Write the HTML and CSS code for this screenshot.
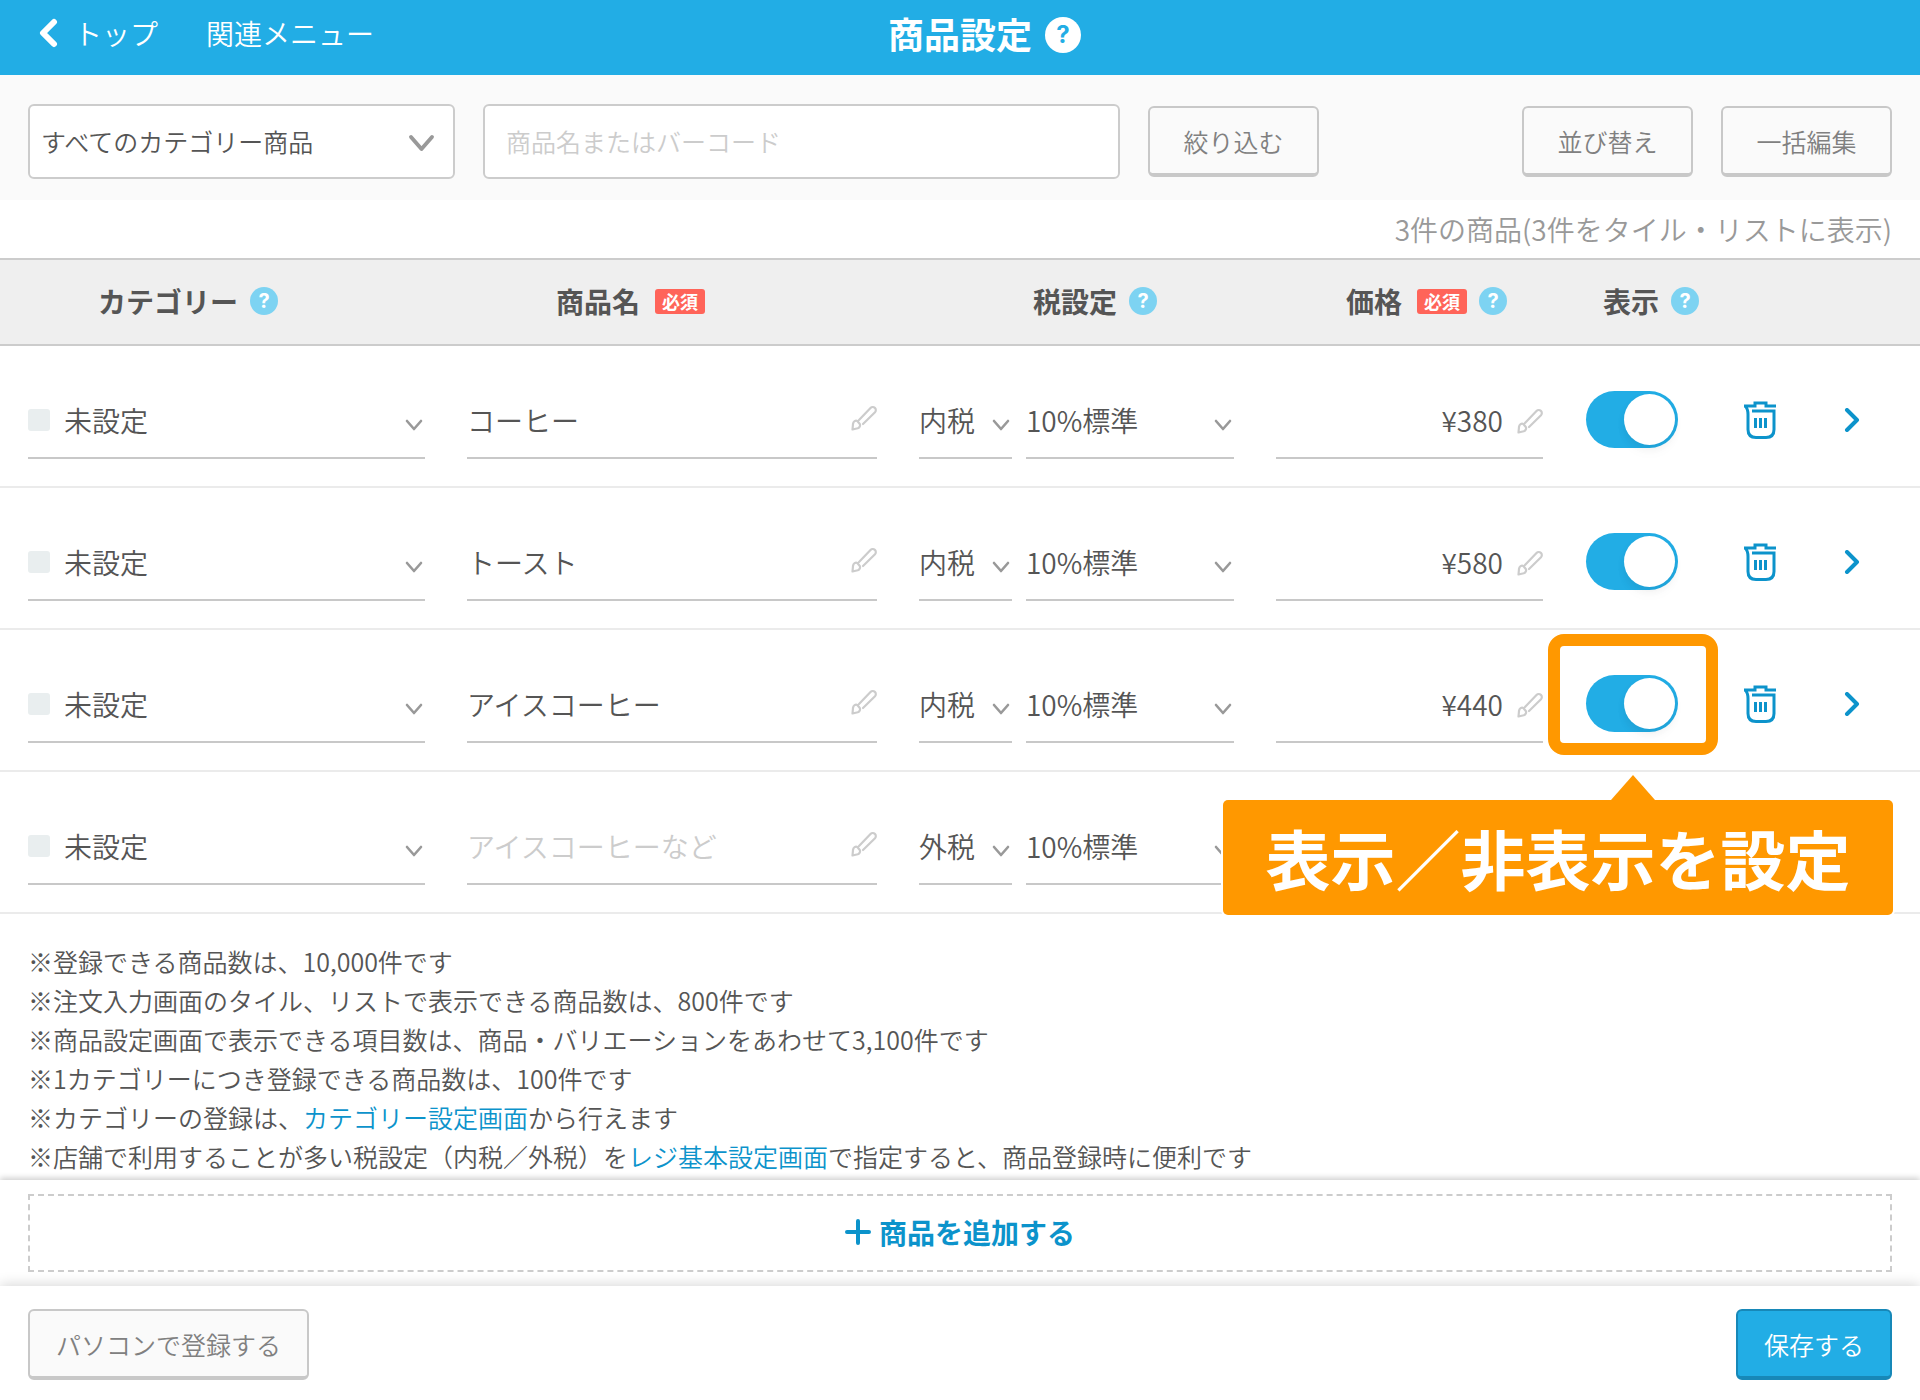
FILE: index.html
```html
<!DOCTYPE html>
<html lang="ja">
<head>
  <meta charset="UTF-8">
  <meta name="viewport" content="width=device-width, initial-scale=1.0">
  <title>商品設定</title>
  <link rel="stylesheet" href="styles.css">
</head>
<body>
  <svg class="sprite" aria-hidden="true">
    <symbol id="down" viewBox="0 0 18 12"><path d="M2 2l7 8 7-8" fill="none" stroke="currentColor" stroke-width="2.6" stroke-linecap="round" stroke-linejoin="round"/></symbol>
    <symbol id="brush" viewBox="0 0 26 26"><path d="M8 15L19.500 3a3 3 0 0 1 4.500 4.200L12 19M1.500 24.500l.5-5.500c.3-2.500 2.600-4 4.300-3l2.500 3c.8 1.600-.2 3.600-2 4.300z" fill="none" stroke="currentColor" stroke-width="2.200" stroke-linecap="round" stroke-linejoin="round"/></symbol>
    <symbol id="trash" viewBox="0 0 34 38"><path d="M1 5h11V2h11v3h10M2.500 5.500c2 2 2.500 5 2.500 8v15q0 8 8 8h10q8 0 8-8V10H9M12.500 17v10M17.500 17v10M22.500 17v10" fill="none" stroke="currentColor" stroke-width="3"/></symbol>
    <symbol id="next" viewBox="0 0 16 24"><path d="M3 2l10 10L3 22" fill="none" stroke="currentColor" stroke-width="4" stroke-linecap="round" stroke-linejoin="round"/></symbol>
  </svg>

  <header class="header">
    <nav class="header-nav">
      <a href="#" class="back"><svg width="20" height="30" viewBox="0 0 20 30"><path d="M16 4L5 15l11 11" fill="none" stroke="currentColor" stroke-width="6" stroke-linecap="round" stroke-linejoin="round"/></svg>トップ</a>
      <a href="#">関連メニュー</a>
    </nav>
    <h1>商品設定</h1>
    <button type="button" class="help help-large" aria-label="ヘルプ">?</button>
  </header>

  <div class="toolbar">
    <div class="filter-select">
      <select aria-label="カテゴリー"><option>すべてのカテゴリー商品</option></select>
      <svg class="arrow"><use href="#down"/></svg>
    </div>
    <input type="text" class="search" placeholder="商品名またはバーコード" aria-label="商品名またはバーコード">
    <button type="button" class="btn">絞り込む</button>
    <button type="button" class="btn push">並び替え</button>
    <button type="button" class="btn">一括編集</button>
  </div>

  <p class="count">3件の商品(3件をタイル・リストに表示)</p>

  <table class="items">
    <colgroup>
      <col class="col-category">
      <col>
      <col class="col-tax">
      <col class="col-price">
      <col class="col-show">
      <col class="col-delete">
      <col class="col-next">
    </colgroup>
    <thead>
      <tr>
        <th class="th-category"><div class="th">カテゴリー<button type="button" class="help" aria-label="カテゴリーのヘルプ">?</button></div></th>
        <th class="th-name"><div class="th">商品名<span class="required">必須</span></div></th>
        <th class="th-tax"><div class="th">税設定<button type="button" class="help" aria-label="税設定のヘルプ">?</button></div></th>
        <th class="th-price"><div class="th">価格<span class="required">必須</span><button type="button" class="help" aria-label="価格のヘルプ">?</button></div></th>
        <th class="th-show"><div class="th">表示<button type="button" class="help" aria-label="表示のヘルプ">?</button></div></th>
        <td></td>
        <td></td>
      </tr>
    </thead>
    <tbody>
      <tr>
        <td class="category"><div class="field"><span class="swatch"></span><select aria-label="カテゴリー"><option>未設定</option></select><svg class="arrow"><use href="#down"/></svg></div></td>
        <td class="name"><div class="field"><input type="text" value="コーヒー" aria-label="商品名"><svg class="brush"><use href="#brush"/></svg></div></td>
        <td class="tax"><div class="tax-fields">
          <div class="field"><select aria-label="税区分"><option>内税</option></select><svg class="arrow"><use href="#down"/></svg></div>
          <div class="field"><select aria-label="税率"><option>10%標準</option></select><svg class="arrow"><use href="#down"/></svg></div>
        </div></td>
        <td class="price"><div class="field"><input type="text" value="¥380" aria-label="価格"><svg class="brush"><use href="#brush"/></svg></div></td>
        <td class="show"><div class="switch"><input type="checkbox" aria-label="表示" checked></div></td>
        <td class="delete"><button type="button" class="icon-btn" aria-label="削除"><svg width="34" height="38"><use href="#trash"/></svg></button></td>
        <td class="next"><button type="button" class="icon-btn" aria-label="詳細"><svg width="16" height="24"><use href="#next"/></svg></button></td>
      </tr>
      <tr>
        <td class="category"><div class="field"><span class="swatch"></span><select aria-label="カテゴリー"><option>未設定</option></select><svg class="arrow"><use href="#down"/></svg></div></td>
        <td class="name"><div class="field"><input type="text" value="トースト" aria-label="商品名"><svg class="brush"><use href="#brush"/></svg></div></td>
        <td class="tax"><div class="tax-fields">
          <div class="field"><select aria-label="税区分"><option>内税</option></select><svg class="arrow"><use href="#down"/></svg></div>
          <div class="field"><select aria-label="税率"><option>10%標準</option></select><svg class="arrow"><use href="#down"/></svg></div>
        </div></td>
        <td class="price"><div class="field"><input type="text" value="¥580" aria-label="価格"><svg class="brush"><use href="#brush"/></svg></div></td>
        <td class="show"><div class="switch"><input type="checkbox" aria-label="表示" checked></div></td>
        <td class="delete"><button type="button" class="icon-btn" aria-label="削除"><svg width="34" height="38"><use href="#trash"/></svg></button></td>
        <td class="next"><button type="button" class="icon-btn" aria-label="詳細"><svg width="16" height="24"><use href="#next"/></svg></button></td>
      </tr>
      <tr>
        <td class="category"><div class="field"><span class="swatch"></span><select aria-label="カテゴリー"><option>未設定</option></select><svg class="arrow"><use href="#down"/></svg></div></td>
        <td class="name"><div class="field"><input type="text" value="アイスコーヒー" aria-label="商品名"><svg class="brush"><use href="#brush"/></svg></div></td>
        <td class="tax"><div class="tax-fields">
          <div class="field"><select aria-label="税区分"><option>内税</option></select><svg class="arrow"><use href="#down"/></svg></div>
          <div class="field"><select aria-label="税率"><option>10%標準</option></select><svg class="arrow"><use href="#down"/></svg></div>
        </div></td>
        <td class="price"><div class="field"><input type="text" value="¥440" aria-label="価格"><svg class="brush"><use href="#brush"/></svg></div></td>
        <td class="show"><div class="switch">
          <input type="checkbox" aria-label="表示" checked>
          <span class="highlight"></span>
          <span class="callout">表示／非表示を設定</span>
        </div></td>
        <td class="delete"><button type="button" class="icon-btn" aria-label="削除"><svg width="34" height="38"><use href="#trash"/></svg></button></td>
        <td class="next"><button type="button" class="icon-btn" aria-label="詳細"><svg width="16" height="24"><use href="#next"/></svg></button></td>
      </tr>
      <tr>
        <td class="category"><div class="field"><span class="swatch"></span><select aria-label="カテゴリー"><option>未設定</option></select><svg class="arrow"><use href="#down"/></svg></div></td>
        <td class="name"><div class="field"><input type="text" placeholder="アイスコーヒーなど" aria-label="商品名"><svg class="brush"><use href="#brush"/></svg></div></td>
        <td class="tax"><div class="tax-fields">
          <div class="field"><select aria-label="税区分"><option>外税</option></select><svg class="arrow"><use href="#down"/></svg></div>
          <div class="field"><select aria-label="税率"><option>10%標準</option></select><svg class="arrow"><use href="#down"/></svg></div>
        </div></td>
        <td class="price"></td>
        <td class="show"></td>
        <td class="delete"></td>
        <td class="next"></td>
      </tr>
    </tbody>
  </table>

  <div class="notes">
    <p>※登録できる商品数は、10,000件です</p>
    <p>※注文入力画面のタイル、リストで表示できる商品数は、800件です</p>
    <p>※商品設定画面で表示できる項目数は、商品・バリエーションをあわせて3,100件です</p>
    <p>※1カテゴリーにつき登録できる商品数は、100件です</p>
    <p>※カテゴリーの登録は、<a href="#">カテゴリー設定画面</a>から行えます</p>
    <p>※店舗で利用することが多い税設定（内税／外税）を<a href="#">レジ基本設定画面</a>で指定すると、商品登録時に便利です</p>
  </div>

  <div class="add-area">
    <button type="button" class="add"><svg width="26" height="26" viewBox="0 0 26 26"><path d="M13 2v22M2 13h22" stroke="currentColor" stroke-width="4" stroke-linecap="round"/></svg>商品を追加する</button>
  </div>

  <footer class="footer">
    <button type="button" class="btn">パソコンで登録する</button>
    <button type="button" class="btn btn-primary">保存する</button>
  </footer>
</body>
</html>
```
FILE: styles.css
```css
* {
  box-sizing: border-box;
}
body {
  margin: 0;
  min-height: 100vh;
  display: flex;
  flex-direction: column;
  background: #fff;
  color: #555;
  font-family: "Noto Sans CJK JP", sans-serif;
  font-size: 28px;
  font-weight: 350;
}
p, h1 {
  margin: 0;
}
a {
  color: #0c93cb;
  text-decoration: none;
}
button, input, select {
  font: inherit;
  color: inherit;
}
button {
  cursor: pointer;
}
.sprite {
  display: none;
}

/* header */
.header {
  display: grid;
  grid-template-columns: 1fr auto 1fr;
  align-items: center;
  height: 75px;
  padding: 0 28px 10px;
  background: #22ade5;
  color: #fff;
}
.header-nav {
  display: flex;
  gap: 48px;
  padding-left: 10px;
}
.header-nav a {
  color: #fff;
}
.back {
  display: flex;
  align-items: center;
  gap: 16px;
}
.header h1 {
  font-size: 36px;
  font-weight: bold;
}
.help {
  display: inline-flex;
  align-items: center;
  justify-content: center;
  width: 28px;
  height: 28px;
  padding: 0;
  border: none;
  border-radius: 50%;
  background: #7dd3f2;
  color: #fff;
  font-family: Inter, sans-serif;
  font-size: 20px;
  font-weight: bold;
  line-height: 28px;
}
.help-large {
  width: 36px;
  height: 36px;
  margin: 4px 0 0 13px;
  background: #fff;
  color: #22ade5;
  font-size: 24px;
}

/* toolbar */
.toolbar {
  display: flex;
  align-items: center;
  gap: 28px;
  height: 125px;
  padding: 8px 28px 0;
  background: #fafafa;
  font-size: 25px;
}
.filter-select {
  position: relative;
  flex: 0 1 427px;
}
.filter-select select, .search {
  display: block;
  width: 100%;
  height: 75px;
  border: 2px solid #ccc;
  border-radius: 6px;
  background: #fff;
  padding-bottom: 2px;
}
.filter-select select {
  appearance: none;
  padding: 0 50px 2px 11px;
}
.search {
  flex: 0 1 637px;
  min-width: 0;
  padding: 0 21px 2px;
}
::placeholder {
  color: #ccc;
  opacity: 1;
}
.arrow {
  position: absolute;
  right: 2px;
  top: 50%;
  width: 18px;
  height: 12px;
  margin-top: -2px;
  color: #999;
  pointer-events: none;
}
.filter-select .arrow {
  right: 20px;
  width: 27px;
  height: 18px;
  margin-top: -8px;
}
.btn {
  min-width: 156px;
  height: 71px;
  padding: 0 26px;
  border: 2px solid #c8c8c8;
  border-bottom-width: 4px;
  border-radius: 6px;
  background: #fafafa;
  color: #808080;
  font-size: 25px;
  white-space: nowrap;
}
.toolbar .btn {
  min-width: 171px;
}
.push {
  margin-left: auto;
}
.count {
  height: 58px;
  padding: 0 28px;
  line-height: 58px;
  text-align: right;
  color: #999;
}

/* item table */
.items {
  width: 100%;
  table-layout: fixed;
  border-spacing: 0;
}
.col-category { width: 446px; }
.col-tax { width: 357px; }
.col-price { width: 309px; }
.col-show { width: 146px; }
.col-delete { width: 100px; }
.col-next { width: 110px; }

.items thead th, .items thead td {
  height: 88px;
  padding: 0 0 2px;
  background: #efefef;
  border-top: 2px solid #ccc;
  border-bottom: 2px solid #ccc;
  text-align: left;
}
.items .th-category { padding-left: 98px; }
.items .th-name { padding-left: 110px; }
.items .th-tax { padding-left: 135px; }
.items .th-price { padding-left: 91px; }
.items .th-show { padding-left: 39px; }
.th {
  display: flex;
  align-items: center;
  gap: 12px;
  white-space: nowrap;
}
.required {
  padding: 0 7px;
  margin-left: 3px;
  border-radius: 3px;
  background: #ff6459;
  color: #fff;
  font-size: 18px;
  line-height: 25px;
}
.items tbody td {
  height: 142px;
  padding: 39px 21px 27px;
  border-bottom: 2px solid #ebebeb;
}
.items .category {
  padding-left: 28px;
}
.field {
  position: relative;
  display: flex;
  align-items: center;
  height: 74px;
  padding-bottom: 2px;
  border-bottom: 2px solid #c8c8c8;
}
.field select, .field input {
  flex: 1;
  width: 100%;
  min-width: 0;
  height: 70px;
  border: none;
  border-radius: 0;
  background: none;
  appearance: none;
  padding: 0 24px 0 0;
}
.swatch {
  width: 22px;
  height: 22px;
  margin-right: 14px;
  border-radius: 3px;
  background: #e9eeef;
}
.brush {
  position: absolute;
  right: 0;
  top: 20px;
  width: 26px;
  height: 26px;
  color: #ccc;
}
.price .brush {
  top: 23px;
}
.items .field input {
  padding-right: 40px;
}
.tax-fields {
  display: grid;
  grid-template-columns: 93px 1fr;
  gap: 14px;
}
.price .field input {
  text-align: right;
}
.items .show, .items .delete, .items .next {
  padding-top: 34px;
}
.items .delete {
  padding-left: 33px;
}
.items .next {
  padding-left: 34px;
}
.switch {
  position: relative;
  width: 93px;
  height: 57px;
  margin-left: 1px;
}
.switch input {
  appearance: none;
  display: block;
  width: 92px;
  height: 57px;
  margin: 0;
  padding: 3px;
  border-radius: 29px;
  background: #ccc;
}
.switch input::before {
  content: "";
  display: block;
  width: 51px;
  height: 51px;
  border-radius: 50%;
  background: #fff;
  box-shadow: 0 4px 8px rgba(0, 0, 0, 0.06), 0 8px 16px rgba(0, 0, 0, 0.02);
}
.switch input:checked {
  background: #22ade5;
}
.switch input:checked::before {
  margin-left: auto;
}
.icon-btn {
  display: flex;
  padding: 0;
  border: none;
  background: none;
  color: #0c93cb;
}

/* guide over the display switch */
.highlight {
  position: absolute;
  left: -38px;
  top: -41px;
  width: 170px;
  height: 121px;
  border: 12px solid #ff9800;
  border-radius: 16px;
  pointer-events: none;
}
.callout {
  position: absolute;
  right: -214px;
  top: 125px;
  z-index: 1;
  width: 670px;
  border-radius: 5px;
  background: #ff9800;
  box-shadow: 0 0 0 2px #fff;
  color: #fff;
  font-size: 65px;
  font-weight: bold;
  line-height: 115px;
  text-align: center;
  white-space: nowrap;
}
.callout::before {
  content: "";
  position: absolute;
  left: 388px;
  bottom: 100%;
  border: 22px solid transparent;
  border-top: none;
  border-bottom: 25px solid #ff9800;
}

/* notes and bottom bars */
.notes {
  padding: 28px 28px 4px;
  font-size: 25px;
  line-height: 39px;
}
.add-area {
  margin-top: auto;
  padding: 14px 28px;
  background: #fff;
  box-shadow: 0 -2px 6px rgba(0, 0, 0, 0.2);
}
.add {
  display: flex;
  align-items: center;
  justify-content: center;
  gap: 8px;
  width: 100%;
  height: 78px;
  padding-bottom: 4px;
  border: 2px dashed #ccc;
  background: none;
  color: #0c93cb;
  font-weight: bold;
}
.footer {
  display: flex;
  justify-content: space-between;
  height: 114px;
  padding: 23px 28px;
  background: #fff;
  box-shadow: 0 -2px 12px rgba(0, 0, 0, 0.15);
}
.btn-primary {
  background: #22ade5;
  border-color: #1788b8;
  color: #fff;
}
```
